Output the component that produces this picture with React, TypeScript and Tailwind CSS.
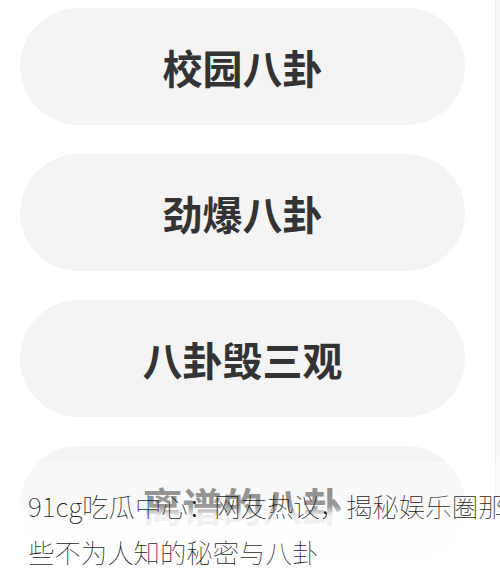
const items = ["校园八卦", "劲爆八卦", "八卦毁三观", "离谱的八卦"];

const cjk = { fontFamily: '"Noto Sans CJK SC", "Noto Sans", sans-serif' };

export default function App() {
  return (
    <div className="relative w-[500px] h-[572px] overflow-hidden bg-white" style={cjk}>
      <div className="flex h-full">
        {/* Category list */}
        <div className="w-[495px] flex flex-col gap-[29px] pt-[8px] pl-[20px]">
          {items.map((label) => (
            <button
              key={label}
              className="w-[445px] h-[117px] shrink-0 rounded-full bg-[#f4f4f4] flex items-center justify-center text-[40px] font-bold text-[#333333] leading-none"
            >
              {label}
            </button>
          ))}
        </div>
        {/* Scroll edge */}
        <div className="w-[5px] h-full border-l border-[#ececec] bg-[#fafafa]" />
      </div>

      {/* Caption overlay */}
      <div className="absolute left-0 right-0 top-[462px] bottom-0 bg-[linear-gradient(to_bottom,rgba(255,255,255,0.4)_0px,rgba(255,255,255,0.5)_44px,rgba(255,255,255,0.93)_54px)]" />
      <p className="absolute left-[28px] top-[483px] w-[486px] text-[26.4px] leading-[46px] font-thin text-[#1f1f1f]">
        91cg吃瓜中心：网友热议，揭秘娱乐圈那些不为人知的秘密与八卦
      </p>
    </div>
  );
}
